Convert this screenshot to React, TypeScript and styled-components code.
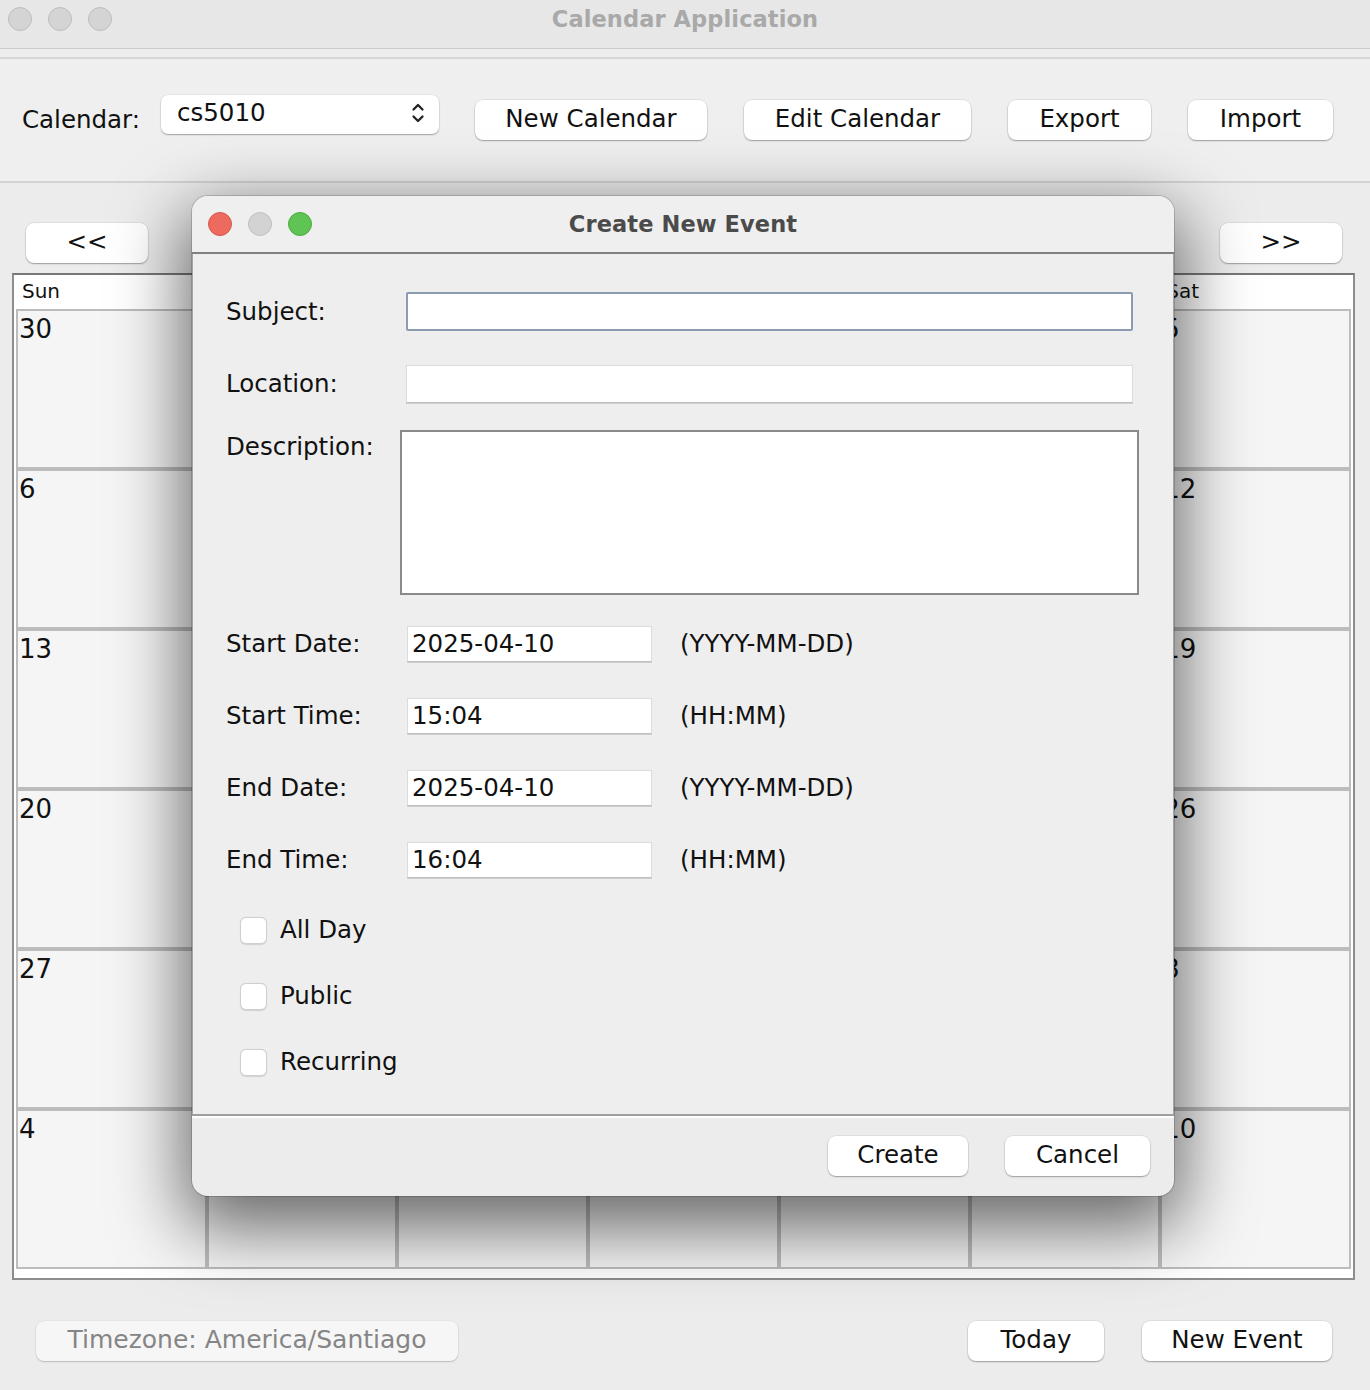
import React from "react";
import styled, { createGlobalStyle } from "styled-components";

const Global = createGlobalStyle`
  html, body { margin: 0; padding: 0; background: #ececec; }
  body { font-family: "DejaVu Sans", "Liberation Sans", sans-serif; color: #111; }
  * { box-sizing: border-box; }
`;

const Win = styled.div`
  position: relative;
  width: 1370px;
  height: 1390px;
  overflow: hidden;
  background: #ececec;
  display: flex;
  flex-direction: column;
`;

const TitleBar = styled.div`
  position: relative;
  height: 49px;
  flex: none;
  background: #e7e7e7;
  border-bottom: 1px solid #cbcbcb;
  display: flex;
  align-items: flex-start;
  justify-content: center;
  padding-top: 4px;
`;

const Lights = styled.div<{ $top: number; $left: number }>`
  position: absolute;
  left: ${(p) => p.$left}px;
  top: ${(p) => p.$top}px;
  display: flex;
  gap: 16px;
`;

const Light = styled.span<{ $c: string; $b: string }>`
  width: 24px;
  height: 24px;
  border-radius: 50%;
  background: ${(p) => p.$c};
  border: 1px solid ${(p) => p.$b};
`;

const WinTitle = styled.div<{ $color: string }>`
  font-weight: bold;
  font-size: 22.5px;
  line-height: 30px;
  color: ${(p) => p.$color};
  letter-spacing: 0.1px;
`;

const Strip = styled.div`
  height: 10px;
  flex: none;
  background: #ededed;
  border-bottom: 2px solid #d6d6d6;
`;

const Toolbar = styled.div`
  height: 124px;
  flex: none;
  background: #efefef;
  border-bottom: 2px solid #d3d3d3;
  display: flex;
  align-items: center;
  padding-left: 22px;
`;

const Label = styled.span<{ $mt?: number }>`
  font-size: 24.5px;
  line-height: 30px;
  color: #111;
  white-space: nowrap;
  margin-top: ${(p) => p.$mt ?? 0}px;
`;

const Combo = styled.div`
  margin-left: 21px;
  margin-bottom: 12px;
  width: 278px;
  height: 39px;
  background: #fff;
  border-radius: 7px;
  box-shadow: 0 1px 1.5px rgba(0, 0, 0, 0.3), 0 0 0 0.5px rgba(0, 0, 0, 0.08);
  display: flex;
  align-items: center;
  justify-content: space-between;
  padding: 0 14px 2px 16px;
  font-size: 24.5px;
  line-height: 30px;
`;

const Btn = styled.button<{ $w: number; $ml?: number }>`
  width: ${(p) => p.$w}px;
  margin-left: ${(p) => p.$ml ?? 0}px;
  height: 40px;
  flex: none;
  background: #fff;
  border: none;
  border-radius: 8px;
  box-shadow: 0 1px 1.5px rgba(0, 0, 0, 0.3), 0 0 0 0.5px rgba(0, 0, 0, 0.1);
  font-family: inherit;
  font-size: 24.5px;
  line-height: 30px;
  color: #111;
  padding: 0 0 2px;
  display: flex;
  align-items: center;
  justify-content: center;
`;

const Main = styled.div`
  flex: 1;
  display: flex;
  flex-direction: column;
  padding-top: 40px;
`;

const NavRow = styled.div`
  display: flex;
  justify-content: space-between;
  padding: 0 28px 0 26px;
`;

const Frame = styled.div`
  margin: 10px 15px 0 12px;
  border: 2px solid #8d8d8d;
  border-top-color: #777;
  background: #fff;
  padding: 0 2px 9px 2px;
`;

const HeaderRow = styled.div`
  height: 34px;
  display: grid;
  grid-template-columns: repeat(7, 1fr);
  align-items: center;
`;

const DayName = styled.span`
  font-size: 20px;
  line-height: 26px;
  padding-left: 6px;
  padding-bottom: 2px;
`;

const Cells = styled.div`
  display: grid;
  grid-template-columns: repeat(7, 1fr);
  grid-auto-rows: 160px;
`;

const Cell = styled.div`
  border: 2.5px solid #bcbcbc;
  background: #f5f5f5;
  font-size: 26px;
  line-height: 32px;
  padding-left: 1px;
  padding-top: 2px;
`;

const BottomRow = styled.div`
  margin-top: 41px;
  display: flex;
  align-items: center;
  padding: 0 38px 0 36px;
`;

const Zone = styled.div`
  width: 422px;
  height: 40px;
  border-radius: 8px;
  background: #f6f6f6;
  box-shadow: 0 1px 1.5px rgba(0, 0, 0, 0.18), 0 0 0 0.5px rgba(0, 0, 0, 0.06);
  color: #858585;
  font-size: 25px;
  line-height: 30px;
  display: flex;
  align-items: center;
  justify-content: center;
  padding-bottom: 2px;
  margin-right: auto;
`;

/* Dialog */
const Dialog = styled.div`
  position: absolute;
  left: 192px;
  top: 196px;
  width: 982px;
  height: 1000px;
  border-radius: 16px;
  background: #ececec;
  display: flex;
  flex-direction: column;
  overflow: hidden;
  box-shadow: 0 24px 70px 8px rgba(0, 0, 0, 0.58), 0 0 0 1px rgba(0, 0, 0, 0.16);
`;

const DlgTitleBar = styled.div`
  position: relative;
  height: 58px;
  flex: none;
  background: #efefef;
  border-bottom: 2px solid #7f7f7f;
  display: flex;
  align-items: center;
  justify-content: center;
`;

const DlgBody = styled.div`
  flex: 1;
  background: #eeeeee;
  border-left: 1.5px solid #a4a4a4;
  border-right: 1.5px solid #a4a4a4;
  border-bottom: 2px solid #9e9e9e;
  box-shadow: 0 2px 0 #ffffff;
  padding: 38px 40px 0 33px;
  display: flex;
  flex-direction: column;
`;

const FormRow = styled.div<{ $mt: number; $top?: boolean }>`
  display: grid;
  grid-template-columns: 180px 1fr;
  align-items: ${(p) => (p.$top ? "start" : "center")};
  margin-top: ${(p) => p.$mt}px;
`;

const DateRow = styled.div<{ $mt: number }>`
  display: flex;
  align-items: center;
  margin-top: ${(p) => p.$mt}px;
`;

const DateLabel = styled.span`
  width: 181px;
  flex: none;
  font-size: 24.5px;
  line-height: 30px;
  white-space: nowrap;
`;

const TextBox = styled.div<{ $h: number; $w?: number; $focus?: boolean }>`
  height: ${(p) => p.$h}px;
  ${(p) => (p.$w ? `width: ${p.$w}px; flex: none;` : "")}
  background: #fff;
  font-size: 24.5px;
  line-height: 30px;
  padding: 0 4px 1px;
  display: flex;
  align-items: center;
  overflow: hidden;
  border: ${(p) => (p.$focus ? "2px solid #8b9cb2" : "1px solid #dcdcdc")};
  border-bottom-color: ${(p) => (p.$focus ? "#8b9cb2" : "#bdbdbd")};
  box-shadow: ${(p) => (p.$focus ? "none" : "0 1px 0 #cfcfcf")};
  border-radius: ${(p) => (p.$focus ? "2px" : "0")};
`;

const TextArea = styled.div`
  height: 165px;
  margin: 0 -6px;
  background: #fff;
  border: 2px solid #8a8a8a;
`;

const Hint = styled.span`
  font-size: 24.5px;
  line-height: 30px;
  margin-left: 28px;
  white-space: nowrap;
`;

const CheckRow = styled.label<{ $mt: number }>`
  display: flex;
  align-items: center;
  gap: 13px;
  padding-left: 14px;
  margin-top: ${(p) => p.$mt}px;
  font-size: 24.5px;
  line-height: 30px;
`;

const Box = styled.span`
  width: 27px;
  height: 27px;
  flex: none;
  border-radius: 6px;
  background: #fff;
  border: 1px solid #cfcfcf;
  box-shadow: 0 0.5px 1px rgba(0, 0, 0, 0.12);
`;

const DlgFooter = styled.div`
  height: 80px;
  flex: none;
  display: flex;
  align-items: center;
  justify-content: flex-end;
  gap: 37px;
  padding: 0 24px 1px 0;
`;

const ChevronUD = () => (
  <svg width="14" height="24" viewBox="0 0 14 24" fill="none" stroke="#222" strokeWidth="2.3" strokeLinecap="round" strokeLinejoin="round">
    <path d="M2.5 8.5 L7 4 L11.5 8.5" />
    <path d="M2.5 15.5 L7 20 L11.5 15.5" />
  </svg>
);

const days = ["Sun", "Mon", "Tue", "Wed", "Thu", "Fri", "Sat"];
const dates = [
  30, 31, 1, 2, 3, 4, 5,
  6, 7, 8, 9, 10, 11, 12,
  13, 14, 15, 16, 17, 18, 19,
  20, 21, 22, 23, 24, 25, 26,
  27, 28, 29, 30, 1, 2, 3,
  4, 5, 6, 7, 8, 9, 10,
];

const dateRows = [
  { label: "Start Date:", value: "2025-04-10", hint: "(YYYY-MM-DD)", mt: 31 },
  { label: "Start Time:", value: "15:04", hint: "(HH:MM)", mt: 36 },
  { label: "End Date:", value: "2025-04-10", hint: "(YYYY-MM-DD)", mt: 36 },
  { label: "End Time:", value: "16:04", hint: "(HH:MM)", mt: 36 },
];

const checks = [
  { label: "All Day", mt: 37 },
  { label: "Public", mt: 36 },
  { label: "Recurring", mt: 36 },
];

export default function App() {
  return (
    <Win>
      <Global />
      <TitleBar>
        <Lights $left={8} $top={7}>
          <Light $c="#d4d4d4" $b="#bdbdbd" />
          <Light $c="#d4d4d4" $b="#bdbdbd" />
          <Light $c="#d4d4d4" $b="#bdbdbd" />
        </Lights>
        <WinTitle $color="#a9a9a9">Calendar Application</WinTitle>
      </TitleBar>
      <Strip />
      <Toolbar>
        <Label>Calendar:</Label>
        <Combo>
          <span>cs5010</span>
          <ChevronUD />
        </Combo>
        <Btn $w={232} $ml={36}>New Calendar</Btn>
        <Btn $w={227} $ml={37}>Edit Calendar</Btn>
        <Btn $w={143} $ml={37}>Export</Btn>
        <Btn $w={145} $ml={37}>Import</Btn>
      </Toolbar>
      <Main>
        <NavRow>
          <Btn $w={122}>&lt;&lt;</Btn>
          <Btn $w={122}>&gt;&gt;</Btn>
        </NavRow>
        <Frame>
          <HeaderRow>
            {days.map((d) => (
              <DayName key={d}>{d}</DayName>
            ))}
          </HeaderRow>
          <Cells>
            {dates.map((n, i) => (
              <Cell key={i}>{n}</Cell>
            ))}
          </Cells>
        </Frame>
        <BottomRow>
          <Zone>Timezone: America/Santiago</Zone>
          <Btn $w={136}>Today</Btn>
          <Btn $w={190} $ml={38}>New Event</Btn>
        </BottomRow>
      </Main>

      <Dialog>
        <DlgTitleBar>
          <Lights $left={16} $top={16}>
            <Light $c="#ed6a5e" $b="#d5564b" />
            <Light $c="#d3d3d3" $b="#bfbfbf" />
            <Light $c="#60c454" $b="#4caa42" />
          </Lights>
          <WinTitle $color="#4b4b4b">Create New Event</WinTitle>
        </DlgTitleBar>
        <DlgBody>
          <FormRow $mt={0}>
            <Label>Subject:</Label>
            <TextBox $h={39} $focus />
          </FormRow>
          <FormRow $mt={34}>
            <Label>Location:</Label>
            <TextBox $h={38} />
          </FormRow>
          <FormRow $mt={27} $top>
            <Label $mt={2}>Description:</Label>
            <TextArea />
          </FormRow>
          {dateRows.map((r) => (
            <DateRow key={r.label} $mt={r.mt}>
              <DateLabel>{r.label}</DateLabel>
              <TextBox $h={36} $w={245}>{r.value}</TextBox>
              <Hint>{r.hint}</Hint>
            </DateRow>
          ))}
          {checks.map((c) => (
            <CheckRow key={c.label} $mt={c.mt}>
              <Box />
              {c.label}
            </CheckRow>
          ))}
        </DlgBody>
        <DlgFooter>
          <Btn $w={140}>Create</Btn>
          <Btn $w={145}>Cancel</Btn>
        </DlgFooter>
      </Dialog>
    </Win>
  );
}
